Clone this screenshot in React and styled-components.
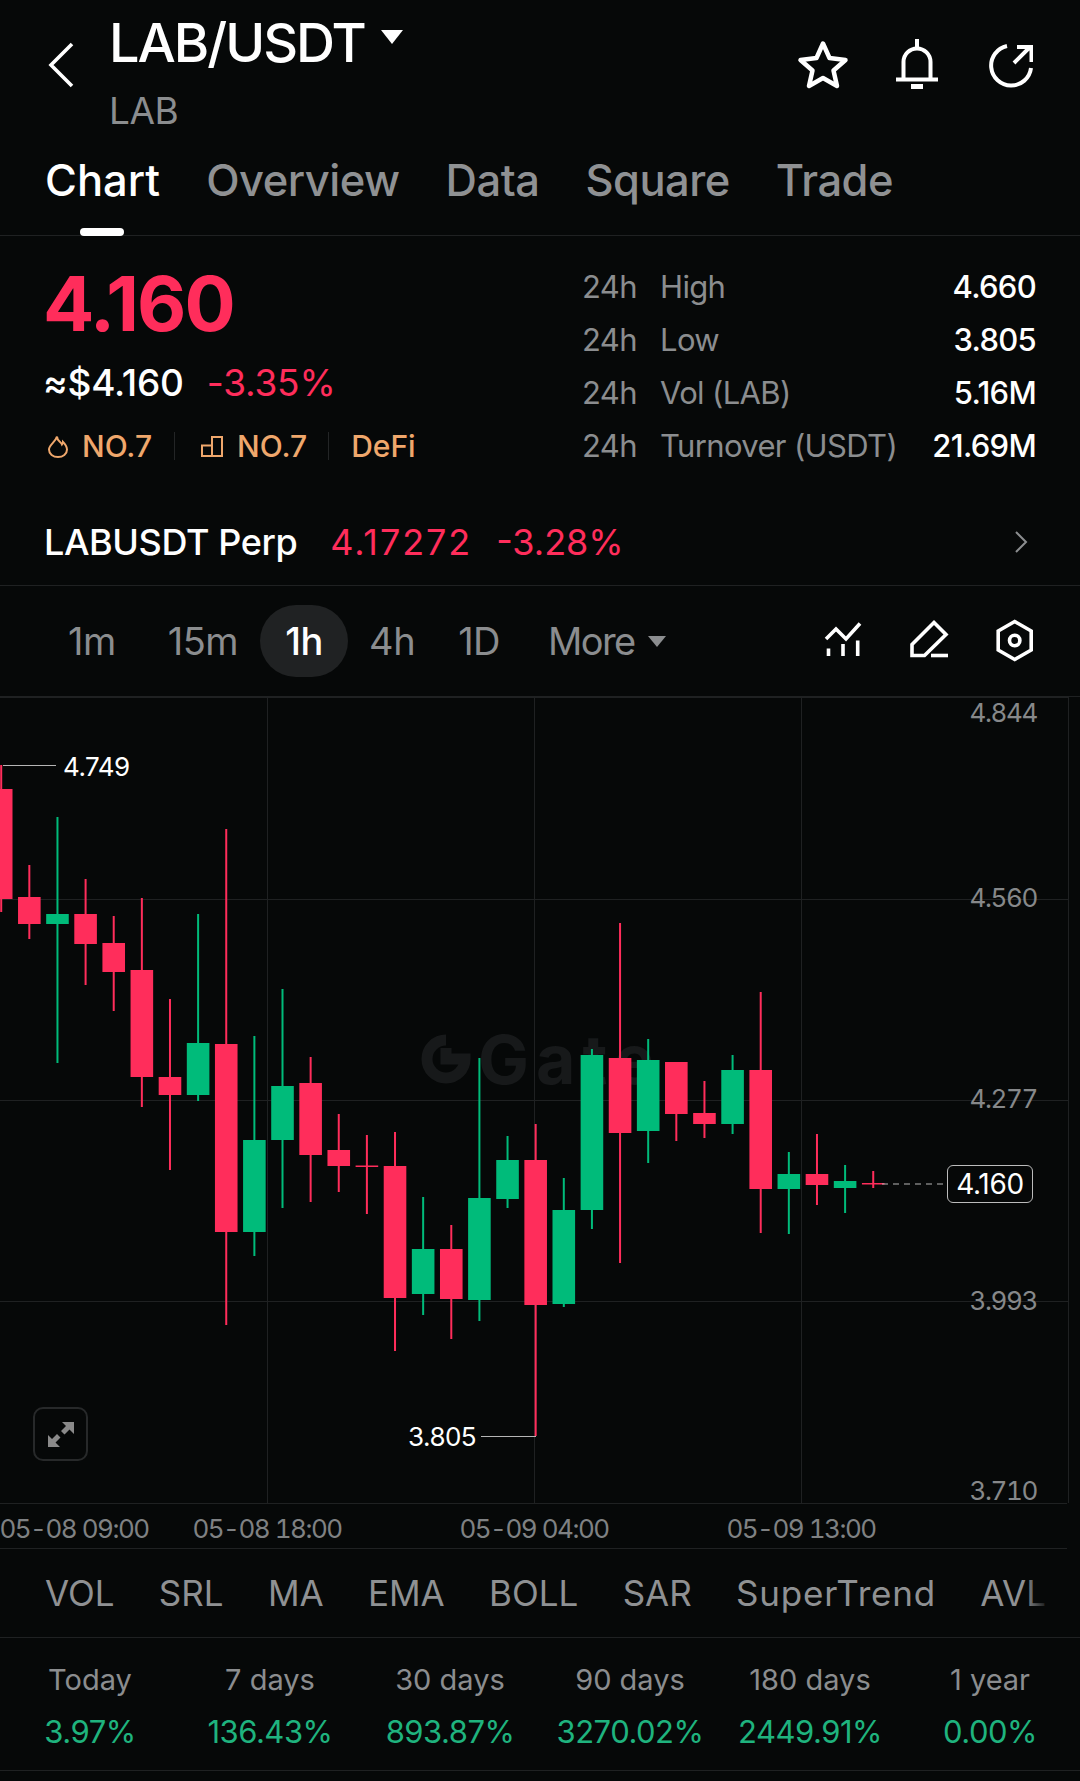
import React from "react";
import styled, { createGlobalStyle } from "styled-components";

const BG = "#060808";
const RED = "#ff2d5b";
const GREEN = "#00bb7a";
const LINE = "#1f2122";

const GlobalStyle = createGlobalStyle`
  html, body {
    margin: 0;
    padding: 0;
    background: ${BG};
  }
  * {
    box-sizing: border-box;
  }
`;

const Page = styled.div`
  width: 1080px;
  height: 1781px;
  background: ${BG};
  color: #fff;
  font-family: Inter, "Liberation Sans", sans-serif;
  overflow: hidden;
`;

const Header = styled.header`
  height: 135px;
  display: flex;
  align-items: flex-start;
  padding-left: 48px;
  position: relative;
`;

const BackIcon = styled.svg`
  width: 26px;
  height: 46px;
  margin-top: 42px;
  margin-right: 35px;
`;

const TitleBlock = styled.div`
  display: flex;
  flex-direction: column;
  padding-top: 11px;
`;

const Title = styled.div`
  font-size: 54px;
  line-height: 64px;
  font-weight: 500;
  letter-spacing: -2px;
  display: flex;
  align-items: center;
`;

const Caret = styled.span`
  display: block;
  width: 0;
  height: 0;
  border-left: ${(p) => p.$size}px solid transparent;
  border-right: ${(p) => p.$size}px solid transparent;
  border-top: ${(p) => p.$size * 1.3}px solid ${(p) => p.$color};
  margin-left: ${(p) => p.$gap}px;
`;

const TitleCaret = styled(Caret)`
  margin-top: -12px;
`;

const SubTitle = styled.div`
  font-size: 37px;
  line-height: 44px;
  color: #8b8d8f;
  letter-spacing: -0.5px;
  margin-top: 14px;
`;

const HeaderIcons = styled.div`
  margin-left: auto;
  display: flex;
  align-items: flex-start;
  padding-top: 39px;
  padding-right: 47px;
`;

const Tabs = styled.nav`
  height: 101px;
  display: flex;
  gap: 46px;
  padding: 22px 45px 0;
  border-bottom: 1px solid ${LINE};
`;

const Tab = styled.div`
  position: relative;
  height: 78px;
  line-height: 46px;
  font-size: 43.5px;
  font-weight: 500;
  letter-spacing: ${(p) => (p.$active ? "0" : "-0.5px")};
  color: ${(p) => (p.$active ? "#fff" : "#8f9193")};
  ${(p) =>
    p.$active &&
    `
    &::after {
      content: "";
      position: absolute;
      left: 35px;
      bottom: -1px;
      width: 44px;
      height: 8px;
      border-radius: 4px;
      background: #fff;
    }
  `}
`;

const Summary = styled.section`
  height: 262px;
  display: flex;
  justify-content: space-between;
  padding: 0 44px 0 45px;
`;

const PriceColumn = styled.div`
  display: flex;
  flex-direction: column;
`;

const BigPrice = styled.div`
  font-size: 76px;
  line-height: 90px;
  font-weight: 700;
  color: ${RED};
  letter-spacing: -2px;
  margin: 22px 0 0 -2px;
`;

const FiatRow = styled.div`
  display: flex;
  gap: 23px;
  margin: 13px 0 0 -2px;
  font-size: 37px;
  line-height: 44px;
  letter-spacing: -0.2px;
`;

const Fiat = styled.span`
  font-weight: 500;
  color: #fff;
`;

const Change = styled.span`
  color: ${RED};
`;

const TagRow = styled.div`
  display: flex;
  align-items: center;
  height: 32px;
  margin-top: 25px;
  font-size: 30px;
  font-weight: 500;
  color: #efa76c;
`;

const Tag = styled.div`
  display: flex;
  align-items: center;
  gap: ${(p) => p.$gap || 0}px;
  height: 28px;
  padding-right: ${(p) => p.$pad}px;
  margin-right: ${(p) => p.$after}px;
  border-right: 1px solid ${(p) => (p.$last ? "transparent" : "#232526")};
`;

const StatsTable = styled.div`
  width: 454px;
  padding-top: 24px;
  display: flex;
  flex-direction: column;
`;

const StatRow = styled.div`
  height: 53px;
  display: flex;
  align-items: center;
  font-size: 31px;
  letter-spacing: -0.65px;
  color: #8b8d8f;
`;

const StatPeriod = styled.span`
  width: 78px;
`;

const StatValue = styled.span`
  margin-left: auto;
  font-weight: 500;
  letter-spacing: -0.7px;
  color: #fff;
`;

const PerpRow = styled.div`
  height: 88px;
  display: flex;
  align-items: center;
  padding: 0 52px 0 44px;
  font-size: 36px;
  border-bottom: 1px solid ${LINE};
`;

const PerpName = styled.span`
  font-weight: 500;
  letter-spacing: -0.4px;
  margin-right: 33px;
`;

const PerpPrice = styled.span`
  color: ${RED};
  letter-spacing: 1.9px;
  margin-right: 24px;
`;

const PerpChange = styled.span`
  color: ${RED};
`;

const RowChevron = styled.svg`
  width: 14px;
  height: 22px;
  margin-left: auto;
`;

const IntervalRow = styled.div`
  height: 111px;
  display: flex;
  align-items: center;
  padding: 0 46px 0 68px;
  font-size: 38px;
  letter-spacing: -0.5px;
  color: #8b8d8f;
  border-bottom: 1px solid ${LINE};
`;

const Interval = styled.div`
  display: flex;
  align-items: center;
  justify-content: center;
  height: 72px;
  margin-right: ${(p) => p.$gap}px;
  ${(p) => p.$tight && "letter-spacing: -1.6px;"}
  ${(p) =>
    p.$active &&
    `
    color: #fff;
    font-weight: 500;
    width: 88px;
    border-radius: 36px;
    background: #202223;
  `}
`;

const ToolIcons = styled.div`
  margin-left: auto;
  display: flex;
  align-items: center;
`;

const ChartArea = styled.div`
  position: relative;
  height: 806px;
`;

const ChartSvg = styled.svg`
  display: block;
  position: relative;
`;

const PriceLabel = styled.span`
  position: absolute;
  right: 43px;
  top: ${(p) => p.$y}px;
  transform: translateY(-50%);
  font-size: 26px;
  font-variant-numeric: tabular-nums;
  letter-spacing: -1.4px;
  color: #86888a;
`;

const ExtremeLabel = styled.span`
  position: absolute;
  left: ${(p) => p.$x}px;
  top: ${(p) => p.$y}px;
  transform: translateY(-50%);
  font-size: 26px;
  letter-spacing: -0.5px;
  color: #fff;
`;

const LastPrice = styled.div`
  position: absolute;
  left: 947px;
  top: 468px;
  width: 86px;
  height: 38px;
  border: 1px solid #bcbcbc;
  border-radius: 6px;
  background: ${BG};
  display: flex;
  align-items: center;
  justify-content: center;
  font-size: 28px;
  letter-spacing: -0.3px;
`;

const ExpandButton = styled.div`
  position: absolute;
  left: 33px;
  top: 710px;
  width: 55px;
  height: 54px;
  border: 2px solid #27292a;
  border-radius: 10px;
  display: flex;
  align-items: center;
  justify-content: center;
`;

const Watermark = styled.div`
  position: absolute;
  left: 421px;
  top: 335px;
  display: flex;
  align-items: center;
  gap: 7px;
  font-size: 68px;
  font-weight: 700;
  letter-spacing: 7px;
  line-height: 54px;
  color: #17191a;
`;

const TimeAxis = styled.div`
  position: relative;
  height: 46px;
  width: 1067px;
  border-bottom: 1px solid ${LINE};
  border-top: 1px solid ${LINE};
`;

const TimeLabel = styled.span`
  position: absolute;
  left: ${(p) => p.$x}px;
  top: 10px;
  transform: translateX(-50%);
  font-size: 26px;
  font-variant-numeric: tabular-nums;
  letter-spacing: -1.5px;
  line-height: 30px;
  color: #7f8183;
  white-space: nowrap;
`;

const IndicatorRow = styled.div`
  position: relative;
  height: 89px;
  display: flex;
  align-items: center;
  gap: 44.3px;
  padding-left: 45px;
  font-size: 35px;
  color: #8f9193;
  border-bottom: 1px solid ${LINE};
  overflow: hidden;
  &::after {
    content: "";
    position: absolute;
    right: 30px;
    top: 0;
    bottom: 0;
    width: 26px;
    background: linear-gradient(to right, rgba(6, 8, 8, 0), ${BG});
  }
`;

const Indicator = styled.span`
  white-space: nowrap;
  letter-spacing: ${(p) => p.$spacing || 0}px;
`;

const ReturnsGrid = styled.div`
  height: 133px;
  display: grid;
  grid-template-columns: repeat(6, 1fr);
  padding-top: 24px;
  text-align: center;
  border-bottom: 1px solid ${LINE};
`;

const ReturnLabel = styled.div`
  font-size: 29px;
  line-height: 36px;
  color: #8b8d8f;
`;

const ReturnValue = styled.div`
  margin-top: 16px;
  font-size: 31px;
  line-height: 36px;
  letter-spacing: -0.5px;
  color: #1fb37e;
`;

// [x index, body top, body bottom, wick top, wick bottom, up?]
const candles = [
  [0, 789, 899, 765, 912, 0],
  [1, 897, 924, 865, 939, 0],
  [2, 914, 924, 817, 1063, 1],
  [3, 914, 944, 879, 985, 0],
  [4, 943, 972, 916, 1011, 0],
  [5, 970, 1077, 898, 1107, 0],
  [6, 1077, 1095, 999, 1170, 0],
  [7, 1043, 1095, 914, 1101, 1],
  [8, 1044, 1232, 829, 1325, 0],
  [9, 1140, 1232, 1036, 1256, 1],
  [10, 1086, 1140, 989, 1208, 1],
  [11, 1083, 1155, 1057, 1202, 0],
  [12, 1150, 1166, 1114, 1192, 0],
  [13, 1165.5, 1167, 1135, 1214, 0],
  [14, 1166, 1298, 1132, 1351, 0],
  [15, 1249, 1294, 1197, 1315, 1],
  [16, 1249, 1299, 1225, 1339, 0],
  [17, 1198, 1300, 1058, 1321, 1],
  [18, 1160, 1199, 1136, 1208, 1],
  [19, 1160, 1305, 1124, 1436, 0],
  [20, 1210, 1304, 1178, 1307, 1],
  [21, 1055, 1210, 1049, 1229, 1],
  [22, 1058, 1133, 923, 1263, 0],
  [23, 1060, 1131, 1039, 1163, 1],
  [24, 1062, 1114, 1062, 1141, 0],
  [25, 1113, 1124, 1081, 1138, 0],
  [26, 1070, 1124, 1055, 1134, 1],
  [27, 1070, 1189, 992, 1233, 0],
  [28, 1174, 1189, 1152, 1234, 1],
  [29, 1174, 1185, 1134, 1205, 0],
  [30, 1181, 1188, 1165, 1213, 1],
  [31, 1183, 1184.5, 1171, 1188, 0],
];

const CHART_TOP = 697;

function CandleChart() {
  return (
    <ChartSvg width="1080" height="806" viewBox="0 697 1080 806">
      <g stroke={LINE} strokeWidth="1">
        <line x1="0" x2="1069" y1="697.5" y2="697.5" />
        <line x1="0" x2="1069" y1="899.5" y2="899.5" />
        <line x1="0" x2="1069" y1="1100.5" y2="1100.5" />
        <line x1="0" x2="1069" y1="1301.5" y2="1301.5" />
        <line x1="267.5" x2="267.5" y1="697" y2="1503" />
        <line x1="534.5" x2="534.5" y1="697" y2="1503" />
        <line x1="801.5" x2="801.5" y1="697" y2="1503" />
        <line x1="1068.5" x2="1068.5" y1="697" y2="1503" />
      </g>
      {candles.map(([i, top, bottom, high, low, up]) => {
        const cx = 1.2 + 28.13 * i;
        const color = up ? GREEN : RED;
        return (
          <g key={i} fill={color}>
            <rect x={cx - 1} y={high} width="2" height={low - high} />
            <rect x={cx - 11.3} y={top} width="22.6" height={bottom - top} />
          </g>
        );
      })}
      <g stroke="#b5b5b5" strokeWidth="1.2">
        <line x1="3" x2="56" y1="765.5" y2="765.5" />
        <line x1="481" x2="536" y1="1436.5" y2="1436.5" />
        <line x1="882" x2="947" y1="1184" y2="1184" strokeDasharray="6 5" />
      </g>
    </ChartSvg>
  );
}

const priceTicks = [
  ["4.844", 712],
  ["4.560", 897],
  ["4.277", 1098],
  ["3.993", 1300],
  ["3.710", 1490],
];

const timeTicks = [
  ["05-08 09:00", 74],
  ["05-08 18:00", 267],
  ["05-09 04:00", 534],
  ["05-09 13:00", 801],
];

const returns = [
  ["Today", "3.97%"],
  ["7 days", "136.43%"],
  ["30 days", "893.87%"],
  ["90 days", "3270.02%"],
  ["180 days", "2449.91%"],
  ["1 year", "0.00%"],
];

const stats = [
  ["High", "4.660"],
  ["Low", "3.805"],
  ["Vol (LAB)", "5.16M"],
  ["Turnover (USDT)", "21.69M"],
];

const indicators = [
  ["VOL"],
  ["SRL"],
  ["MA"],
  ["EMA"],
  ["BOLL"],
  ["SAR"],
  ["SuperTrend", 0.8],
  ["AVL"],
];

function HeaderIconSet() {
  return (
    <svg width="236" height="52" viewBox="797 39 236 52" fill="none" stroke="#fff">
      <polygon
        points="823,43.5 829.5,58 845.5,60 833.5,70.5 837,86 823,78 809,86 812.5,70.5 800.5,60 816.5,58"
        strokeWidth="4.5"
        strokeLinejoin="round"
      />
      <path d="M903.5 79 V62 a13.5 13.5 0 0 1 27 0 V79" strokeWidth="4" />
      <path d="M896 79.5 H938" strokeWidth="4" />
      <path d="M917 39 V47" strokeWidth="4" />
      <path d="M911 86.5 H923" strokeWidth="5" />
      <path d="M1007 46 A20 20 0 1 0 1031 68" strokeWidth="4" />
      <path d="M1014 63 L1030 47 M1017 47 H1031.5 V62" strokeWidth="4" />
    </svg>
  );
}

function ToolIconSet() {
  return (
    <svg width="210" height="44" viewBox="825 621 210 44" fill="none" stroke="#fff" strokeWidth="3.6">
      <path d="M827 641 L837 631 L847 641 L861 625.5" />
      <path d="M829.5 650.5 V658 M844 646 V658 M858.7 642.5 V658" />
      <path d="M913 646.5 L935 624.5 L947 636.5 L925.5 657.5 H913 Z" />
      <path d="M932 657.5 H949" />
      <path d="M1015.7 623.5 L1032.2 633 V652 L1015.7 661.5 L999.2 652 V633 Z" />
      <circle cx="1015.7" cy="642.5" r="5.2" />
    </svg>
  );
}

function FlameIcon() {
  return (
    <svg width="23" height="23" viewBox="-3 0 23 23" fill="none" stroke="#efa76c" strokeWidth="2">
      <path d="M9 1.5 C9 6 13 6.5 14 9.5 C14.8 8.5 15 7.5 15 7 C17.5 9.5 19 12 19 14.5 C19 19 15 22 10 22 C5 22 1 19 1 14.5 C1 10 7.5 7 9 1.5 Z" />
    </svg>
  );
}

function RankIcon() {
  return (
    <svg width="22" height="21" viewBox="0 0 22 21" fill="none" stroke="#efa76c" strokeWidth="2">
      <path d="M1 9.5 H11 V20 H1 Z M11 20 V1 H21 V20 H11" />
    </svg>
  );
}

export default function App() {
  return (
    <Page>
      <GlobalStyle />
      <Header>
        <BackIcon viewBox="0 0 26 46" fill="none" stroke="#fff" strokeWidth="3.6">
          <path d="M24 2 L3 23 L24 44" />
        </BackIcon>
        <TitleBlock>
          <Title>
            LAB/USDT
            <TitleCaret $size={11} $color="#fff" $gap={16} />
          </Title>
          <SubTitle>LAB</SubTitle>
        </TitleBlock>
        <HeaderIcons>
          <HeaderIconSet />
        </HeaderIcons>
      </Header>

      <Tabs>
        <Tab $active>Chart</Tab>
        <Tab>Overview</Tab>
        <Tab>Data</Tab>
        <Tab>Square</Tab>
        <Tab>Trade</Tab>
      </Tabs>

      <Summary>
        <PriceColumn>
          <BigPrice>4.160</BigPrice>
          <FiatRow>
            <Fiat>≈$4.160</Fiat>
            <Change>-3.35%</Change>
          </FiatRow>
          <TagRow>
            <Tag $gap={14} $pad={22} $after={26}>
              <FlameIcon />
              NO.7
            </Tag>
            <Tag $gap={14} $pad={21} $after={22}>
              <RankIcon />
              NO.7
            </Tag>
            <Tag $last $pad={0} $after={0}>DeFi</Tag>
          </TagRow>
        </PriceColumn>
        <StatsTable>
          {stats.map(([label, value]) => (
            <StatRow key={label}>
              <StatPeriod>24h</StatPeriod>
              {label}
              <StatValue>{value}</StatValue>
            </StatRow>
          ))}
        </StatsTable>
      </Summary>

      <PerpRow>
        <PerpName>LABUSDT Perp</PerpName>
        <PerpPrice>4.17272</PerpPrice>
        <PerpChange>-3.28%</PerpChange>
        <RowChevron viewBox="0 0 14 22" fill="none" stroke="#8b8d8f" strokeWidth="2">
          <path d="M2 1 L12 11 L2 21" />
        </RowChevron>
      </PerpRow>

      <IntervalRow>
        <Interval $gap={52}>1m</Interval>
        <Interval $gap={22}>15m</Interval>
        <Interval $active $gap={21}>1h</Interval>
        <Interval $gap={43}>4h</Interval>
        <Interval $gap={48}>1D</Interval>
        <Interval $gap={0} $tight>More</Interval>
        <Caret $size={9} $color="#8b8d8f" $gap={13} />
        <ToolIcons>
          <ToolIconSet />
        </ToolIcons>
      </IntervalRow>

      <ChartArea>
        <Watermark>
          <svg width="50" height="50" viewBox="0 0 50 50" fill="none">
            <path
              d="M25 6 A19 19 0 1 0 44 25 H25 V14"
              stroke="#17191a"
              strokeWidth="11"
            />
          </svg>
          Gate
        </Watermark>
        <CandleChart />
        {priceTicks.map(([label, y]) => (
          <PriceLabel key={label} $y={y - CHART_TOP}>
            {label}
          </PriceLabel>
        ))}
        <ExtremeLabel $x={63} $y={69}>4.749</ExtremeLabel>
        <ExtremeLabel $x={408} $y={739}>3.805</ExtremeLabel>
        <LastPrice>4.160</LastPrice>
        <ExpandButton>
          <svg width="28" height="27" viewBox="0 0 28 27" fill="#8a8a8a" stroke="none">
            <path d="M15 1 H27 V13 L22.5 8.5 L17.5 13.5 L14 10 L19 5 Z" />
            <path d="M1 14 V26 H13 L8.5 21.5 L13.5 16.5 L10 13 L5 18 Z" />
          </svg>
        </ExpandButton>
      </ChartArea>

      <TimeAxis>
        {timeTicks.map(([label, x]) => (
          <TimeLabel key={label} $x={x}>
            {label}
          </TimeLabel>
        ))}
      </TimeAxis>

      <IndicatorRow>
        {indicators.map(([name, spacing]) => (
          <Indicator key={name} $spacing={spacing}>
            {name}
          </Indicator>
        ))}
      </IndicatorRow>

      <ReturnsGrid>
        {returns.map(([label, value]) => (
          <div key={label}>
            <ReturnLabel>{label}</ReturnLabel>
            <ReturnValue>{value}</ReturnValue>
          </div>
        ))}
      </ReturnsGrid>
    </Page>
  );
}
